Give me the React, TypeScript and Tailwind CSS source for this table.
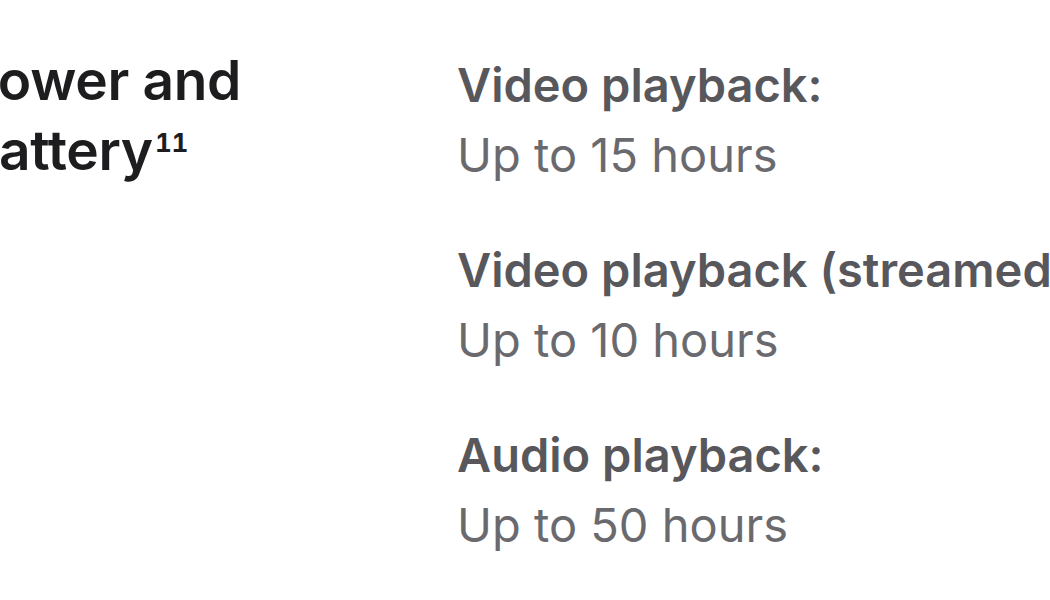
const specs = [
  { label: "Video playback:", value: "Up to 15 hours" },
  { label: "Video playback (streamed):", value: "Up to 10 hours" },
  { label: "Audio playback:", value: "Up to 50 hours" },
];

export default function App() {
  return (
    <div
      className="w-[1050px] h-[600px] overflow-hidden bg-white flex"
      style={{ fontFamily: "Inter, 'Liberation Sans', sans-serif" }}
    >
      <div className="w-[457px] shrink-0 pt-[45px]">
        <h3 className="-ml-[37px] text-[55px] leading-[70px] font-semibold text-[#1d1d1f] tracking-[-0.3px] whitespace-nowrap">
          Power and
          <br />
          Battery
          <sup className="text-[26px] font-bold relative -top-[18px] ml-[2px] tabular-nums">11</sup>
        </h3>
      </div>
      <div className="flex flex-col gap-[45px] pt-[50px]">
        {specs.map((s) => (
          <div key={s.label} className="text-[47px] leading-[70px] whitespace-nowrap">
            <p className="font-semibold text-[#58585c]">{s.label}</p>
            <p className="text-[#6a6a6e]">{s.value}</p>
          </div>
        ))}
      </div>
    </div>
  );
}
